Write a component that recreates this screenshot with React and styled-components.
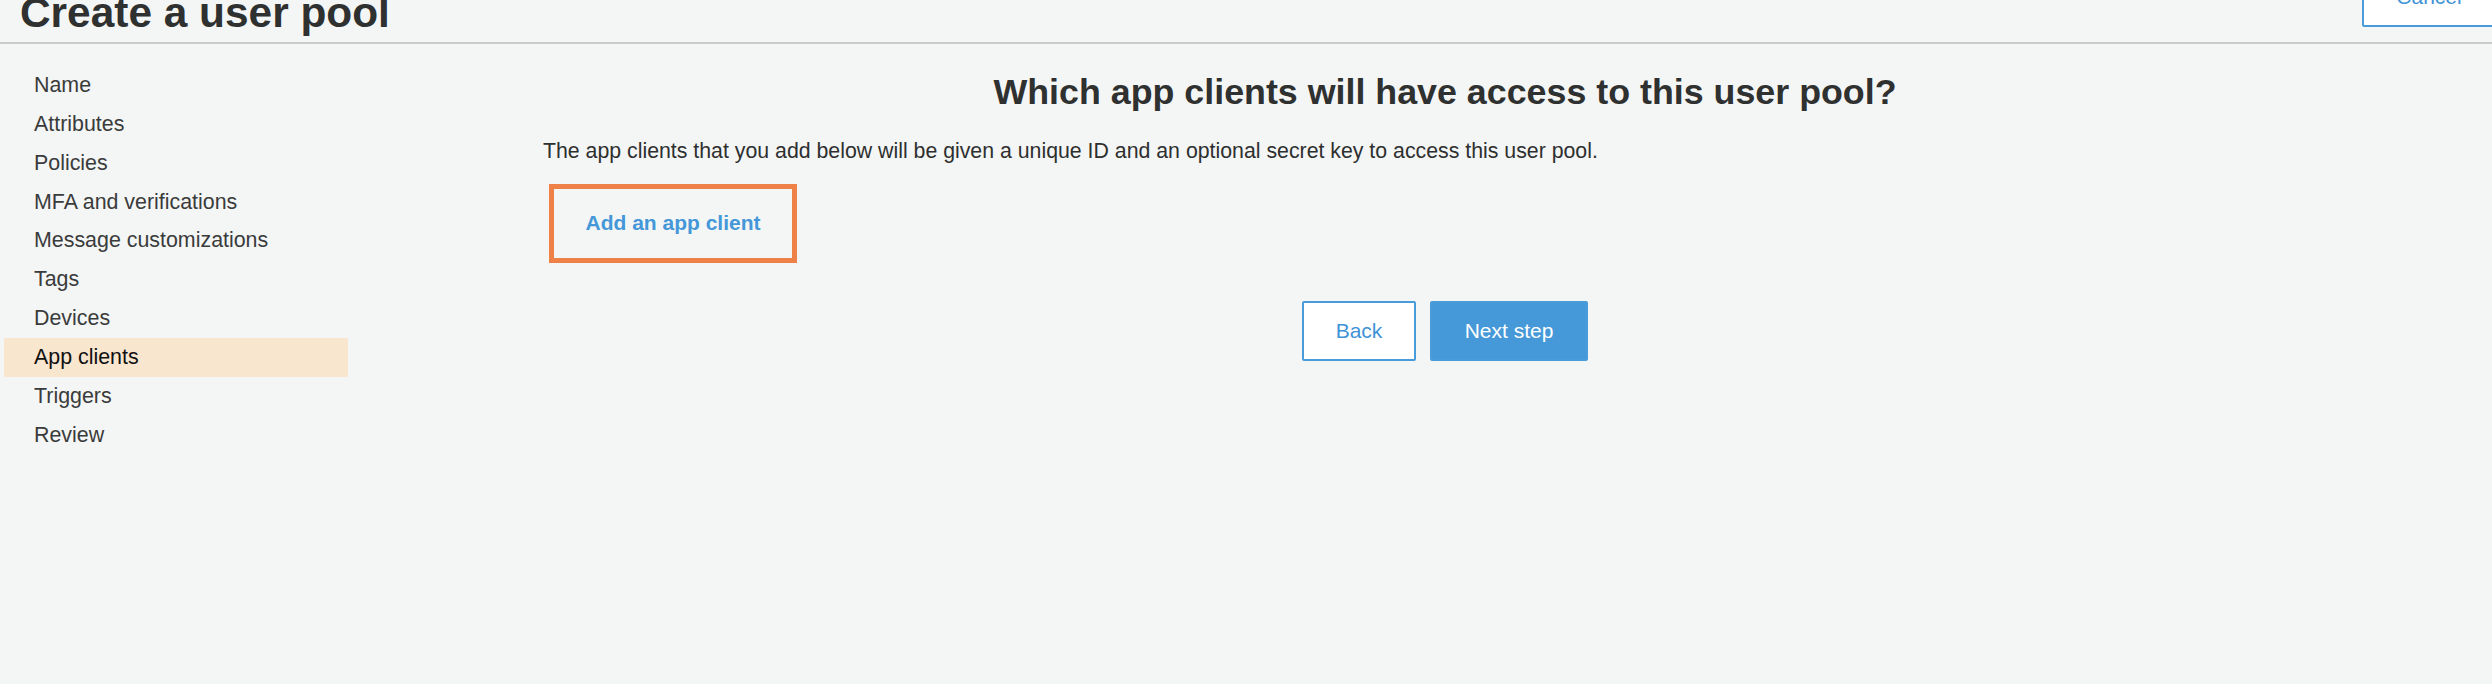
import React from "react";
import styled, { createGlobalStyle } from "styled-components";

const GlobalStyle = createGlobalStyle`
  html, body {
    margin: 0;
    padding: 0;
    background: #f4f6f5;
  }
  body {
    font-family: "Liberation Sans", Arial, Helvetica, sans-serif;
    color: #333;
  }
`;

const Page = styled.div`
  min-height: 100vh;
  background: #f4f6f5;
  overflow: hidden;
`;

const Header = styled.header`
  display: flex;
  justify-content: space-between;
  align-items: flex-end;
  height: 42px;
  padding-left: 20px;
  border-bottom: 2px solid #c9cac9;
`;

const PageTitle = styled.h1`
  margin: 0 0 8px;
  font-size: 42.4px;
  line-height: 1;
  font-weight: 700;
  color: #2f3030;
  white-space: nowrap;
`;

const CancelButton = styled.button`
  flex: none;
  width: 134px;
  height: 60px;
  margin: 0 -4px 15px 0;
  border: 2px solid #4a9bd9;
  border-radius: 2px;
  background: #fff;
  color: #3f93d6;
  font-family: inherit;
  font-size: 21px;
`;

const Body = styled.div`
  display: flex;
`;

const Sidebar = styled.nav`
  flex: none;
  width: 344px;
  padding: 22px 0 0 4px;
`;

const NavItem = styled.div`
  height: 38.86px;
  display: flex;
  align-items: center;
  padding-left: 30px;
  font-size: 21.4px;
  color: ${p => (p.$active ? "#111" : "#3a3b3b")};
  background: ${p => (p.$active ? "#f8e6cf" : "transparent")};
`;

const Main = styled.main`
  flex: 1;
  padding: 0 145px 0 195px;
  display: flex;
  flex-direction: column;
`;

const Heading = styled.h2`
  margin: 27px 0 0;
  text-align: center;
  font-size: 35.8px;
  line-height: 1.2;
  font-weight: 700;
  color: #2f3030;
`;

const Intro = styled.p`
  margin: 25px 0 0;
  font-size: 21.3px;
  line-height: 1.2;
  color: #2e2f2f;
`;

const AddClient = styled.div`
  box-sizing: border-box;
  width: 248px;
  height: 79px;
  margin: 19px 0 0 6px;
  border: 5px solid #ee8148;
  display: flex;
  align-items: center;
  justify-content: center;
  font-size: 21px;
  line-height: 1.2;
  font-weight: 700;
  color: #4497d8;
`;

const Actions = styled.div`
  display: flex;
  justify-content: center;
  gap: 14px;
  margin-top: 38px;
`;

const Button = styled.button`
  box-sizing: border-box;
  height: 60px;
  width: ${p => p.$width}px;
  border-radius: 2px;
  font-family: inherit;
  font-size: 21px;
  border: 2px solid #4a9bd9;
  background: ${p => (p.$primary ? "#4599d8" : "#fff")};
  color: ${p => (p.$primary ? "#fff" : "#3f93d6")};
`;

const steps = [
  "Name",
  "Attributes",
  "Policies",
  "MFA and verifications",
  "Message customizations",
  "Tags",
  "Devices",
  "App clients",
  "Triggers",
  "Review",
];

export default function App() {
  return (
    <Page>
      <GlobalStyle />
      <Header>
        <PageTitle>Create a user pool</PageTitle>
        <CancelButton>Cancel</CancelButton>
      </Header>
      <Body>
        <Sidebar>
          {steps.map(s => (
            <NavItem key={s} $active={s === "App clients"}>
              {s}
            </NavItem>
          ))}
        </Sidebar>
        <Main>
          <Heading>Which app clients will have access to this user pool?</Heading>
          <Intro>
            The app clients that you add below will be given a unique ID and an optional secret key to access this user pool.
          </Intro>
          <AddClient>Add an app client</AddClient>
          <Actions>
            <Button $width={114}>Back</Button>
            <Button $width={158} $primary>Next step</Button>
          </Actions>
        </Main>
      </Body>
    </Page>
  );
}
